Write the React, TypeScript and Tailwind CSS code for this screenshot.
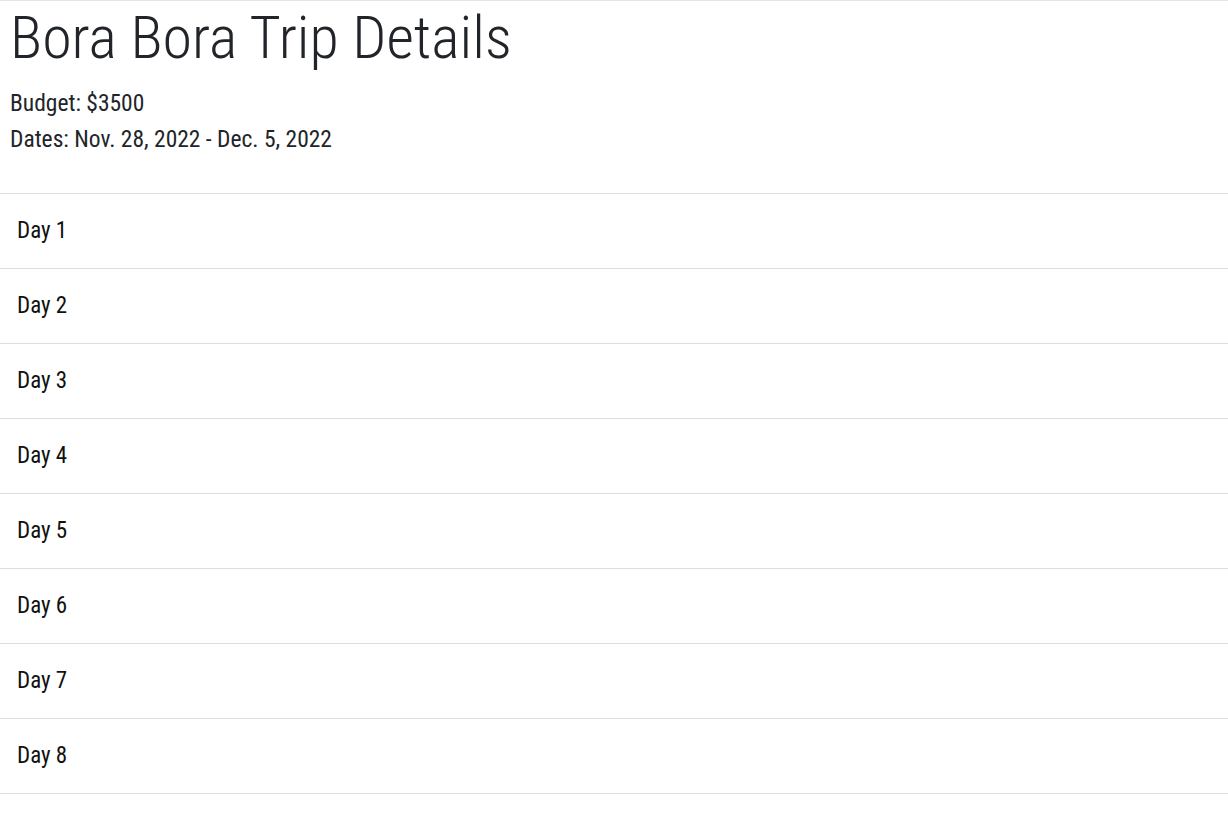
import React from 'react';

const days = [1, 2, 3, 4, 5, 6, 7, 8];

export default function App() {
  return (
    <div className="min-h-[825px] bg-white border-t border-[#e5e5e5] font-['Roboto',sans-serif] font-stretch-condensed text-[#212529]">
      {/* Trip header */}
      <div className="pl-[10px] pt-[3px] h-[192px]">
        <h1 className="text-[60px] font-light leading-[68px]">Bora Bora Trip Details</h1>
        <p className="text-[23.5px] leading-[36px] mt-[13px]">Budget: $3500</p>
        <p className="text-[23.5px] leading-[36px]">Dates: Nov. 28, 2022 - Dec. 5, 2022</p>
      </div>

      {/* Day list */}
      <ul className="border-t border-[#dedede]">
        {days.map((d) => (
          <li key={d} className="h-[75px] flex items-center pl-[17px] border-b border-[#dedede] text-[23px] text-[#111]">
            Day {d}
          </li>
        ))}
      </ul>
    </div>
  );
}
